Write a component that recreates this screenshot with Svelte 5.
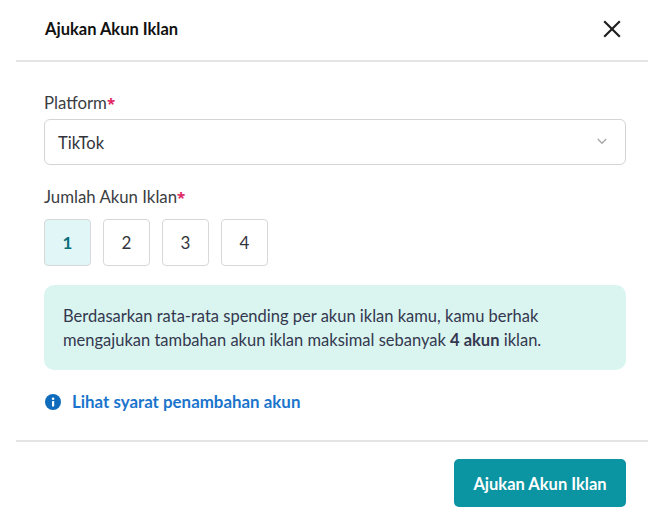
<script>
	let selected = 1;
	const counts = [1, 2, 3, 4];
</script>

<div class="modal">
	<header class="head">
		<h2>Ajukan Akun Iklan</h2>
		<button class="close" aria-label="Tutup">
			<svg width="18" height="18" viewBox="0 0 18 18"><path d="M1.2 1.2 16.8 16.8M16.8 1.2 1.2 16.8" stroke="#1f1f1f" stroke-width="2.2" fill="none" /></svg>
		</button>
	</header>

	<div class="body">
		<div class="label">Platform<span class="req">*</span></div>
		<div class="select">
			<span>TikTok</span>
			<svg width="10" height="7" viewBox="0 0 10 7"><path d="M.8 1 5 5.2 9.2 1" stroke="#a8a8a8" stroke-width="1.4" fill="none" /></svg>
		</div>

		<div class="label second">Jumlah Akun Iklan<span class="req">*</span></div>
		<div class="counts">
			{#each counts as n}
				<button class="count" class:active={selected === n} on:click={() => (selected = n)}>{n}</button>
			{/each}
		</div>

		<div class="note">
			Berdasarkan rata-rata spending per akun iklan kamu, kamu berhak<br />
			mengajukan tambahan akun iklan maksimal sebanyak <b>4 akun</b> iklan.
		</div>

		<div class="link">
			<svg width="16" height="16" viewBox="0 0 16 16">
				<circle cx="8" cy="8" r="8" fill="#0f6cbd" />
				<rect x="7" y="7" width="2.2" height="5.5" rx="0.6" fill="#fff" />
				<circle cx="8.1" cy="4.7" r="1.3" fill="#fff" />
			</svg>
			<span>Lihat syarat penambahan akun</span>
		</div>
	</div>

	<footer class="foot">
		<button class="submit">Ajukan Akun Iklan</button>
	</footer>
</div>

<style>
	:global(body) {
		margin: 0;
		background: #fff;
	}
	.modal {
		width: 648px;
		height: 520px;
		padding-left: 16px;
		box-sizing: border-box;
		font-family: Lato, sans-serif;
		color: #31353b;
	}
	.head {
		height: 62px;
		display: flex;
		align-items: center;
		justify-content: space-between;
		padding: 0 27px 0 29px;
		border-bottom: 2px solid #e4e4e4;
		box-sizing: border-box;
	}
	h2 {
		margin: -2px 0 0;
		font-size: 16.5px;
		font-weight: 700;
		color: #111;
	}
	.close {
		border: 0;
		background: none;
		padding: 0;
		display: flex;
		margin-top: -3px;
	}
	.body {
		padding: 31px 22px 0 28px;
		height: 380px;
		box-sizing: border-box;
		border-bottom: 2px solid #e4e4e4;
	}
	.label {
		font-size: 16.8px;
		line-height: 20px;
		margin-bottom: 6px;
		color: #3a3d42;
	}
	.label.second {
		margin-top: 22px;
		margin-bottom: 12px;
	}
	.req {
		color: #e0245e;
		font-family: 'Noto Sans', sans-serif;
		font-size: 15px;
		font-weight: 700;
	}
	.select {
		height: 46px;
		box-sizing: border-box;
		border: 1px solid #d4d4d4;
		border-radius: 6px;
		display: flex;
		align-items: center;
		justify-content: space-between;
		padding: 2px 18px 0 13px;
		font-size: 16.5px;
	}
	.select svg {
		margin-top: -3px;
	}
	.counts {
		display: flex;
		gap: 12px;
	}
	.count {
		width: 47px;
		height: 47px;
		border: 1px solid #d8d8d8;
		border-radius: 4px;
		background: #fff;
		font: inherit;
		font-size: 17px;
		color: #31353b;
		padding: 0;
	}
	.count.active {
		background: #e0f6f7;
		color: #0a6f78;
		font-weight: 700;
	}
	.note {
		margin-top: 19px;
		height: 85px;
		box-sizing: border-box;
		background: #daf5f0;
		border-radius: 10px;
		padding: 20px 19px;
		font-size: 16.5px;
		line-height: 23.5px;
		color: #34384f;
	}
	.link {
		margin-top: 21px;
		display: flex;
		align-items: center;
		gap: 11px;
		padding-left: 1px;
		font-size: 16.9px;
		font-weight: 700;
		color: #1b75cc;
	}
	.foot {
		display: flex;
		justify-content: flex-end;
		padding: 17px 22px 0 0;
	}
	.submit {
		width: 172px;
		height: 48px;
		border: 0;
		border-radius: 5px;
		padding-top: 2px;
		background: #0b94a2;
		color: #fff;
		font: inherit;
		font-size: 16.5px;
		font-weight: 700;
	}
</style>
